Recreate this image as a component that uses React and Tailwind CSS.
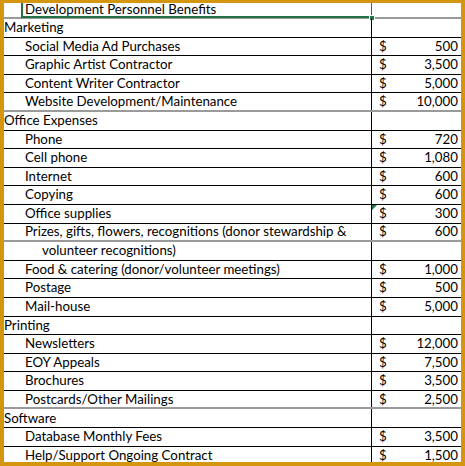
import React from "react";

const rows = [
  { type: "item", label: "Development Personnel Benefits", selected: true, line: "gray" },
  { type: "cat", label: "Marketing" },
  { type: "item", label: "Social Media Ad Purchases", amount: "500" },
  { type: "item", label: "Graphic Artist Contractor", amount: "3,500" },
  { type: "item", label: "Content Writer Contractor", amount: "5,000" },
  { type: "item", label: "Website Development/Maintenance", amount: "10,000", line: "gray" },
  { type: "cat", label: "Office Expenses" },
  { type: "item", label: "Phone", amount: "720" },
  { type: "item", label: "Cell phone", amount: "1,080" },
  { type: "item", label: "Internet", amount: "600" },
  { type: "item", label: "Copying", amount: "600" },
  { type: "item", label: "Office supplies", amount: "300", flag: true },
  { type: "item", label: "Prizes, gifts, flowers, recognitions (donor stewardship &", amount: "600", line: "gray" },
  { type: "wrap", label: "volunteer recognitions)" },
  { type: "item", label: "Food & catering (donor/volunteer meetings)", amount: "1,000" },
  { type: "item", label: "Postage", amount: "500" },
  { type: "item", label: "Mail-house", amount: "5,000" },
  { type: "cat", label: "Printing" },
  { type: "item", label: "Newsletters", amount: "12,000" },
  { type: "item", label: "EOY Appeals", amount: "7,500" },
  { type: "item", label: "Brochures", amount: "3,500" },
  { type: "item", label: "Postcards/Other Mailings", amount: "2,500", line: "gray" },
  { type: "cat", label: "Software" },
  { type: "item", label: "Database Monthly Fees", amount: "3,500" },
  { type: "item", label: "Help/Support Ongoing Contract", amount: "1,500" },
];

const Row = ({ row, first }) => {
  const lineCls =
    row.line === "gray"
      ? "border-b-2 border-[#9a9a9a]"
      : "border-b border-black";
  const pad =
    row.type === "cat" ? "pl-0" : row.type === "wrap" ? "pl-[38px]" : "pl-[21px]";

  return (
    <div className={`relative flex shrink-0 ${first ? "h-[16px]" : "h-[18.6px]"} ${lineCls}`}>
      <div
        className={`w-[368px] h-full border-r ${row.selected ? "border-[#217346]" : "border-black"} ${pad} flex items-center leading-none whitespace-nowrap`}
      >
        {row.label}
      </div>
      <div className="relative flex-1 flex items-center justify-between pl-[7px] pr-[3px] leading-none">
        {row.amount && (
          <>
            <span>$</span>
            <span>{row.amount}</span>
          </>
        )}
        {row.flag && (
          <span className="absolute left-0 top-0 w-0 h-0 border-t-[5px] border-r-[5px] border-t-[#217346] border-r-transparent" />
        )}
      </div>
      {row.selected && (
        <>
          <span className="absolute left-[17px] top-0 w-[352px] h-[calc(100%+1px)] border-l-2 border-b-2 border-[#217346]" />
          <span className="absolute left-[365px] bottom-[-4px] w-[6px] h-[6px] bg-[#217346] border border-white" />
        </>
      )}
    </div>
  );
};

export default function App() {
  return (
    <div className="w-[465px] h-[466px] bg-[#d4960f] pt-[3px] pl-[4px] pr-[4px] pb-[4px]">
      <div
        className="w-[457px] h-[459px] bg-white overflow-hidden flex flex-col text-[13.3px] text-black"
        style={{ fontFamily: "Lato, 'Noto Sans', sans-serif" }}
      >
        {rows.map((r, i) => (
          <Row key={i} row={r} first={i === 0} />
        ))}
      </div>
    </div>
  );
}
